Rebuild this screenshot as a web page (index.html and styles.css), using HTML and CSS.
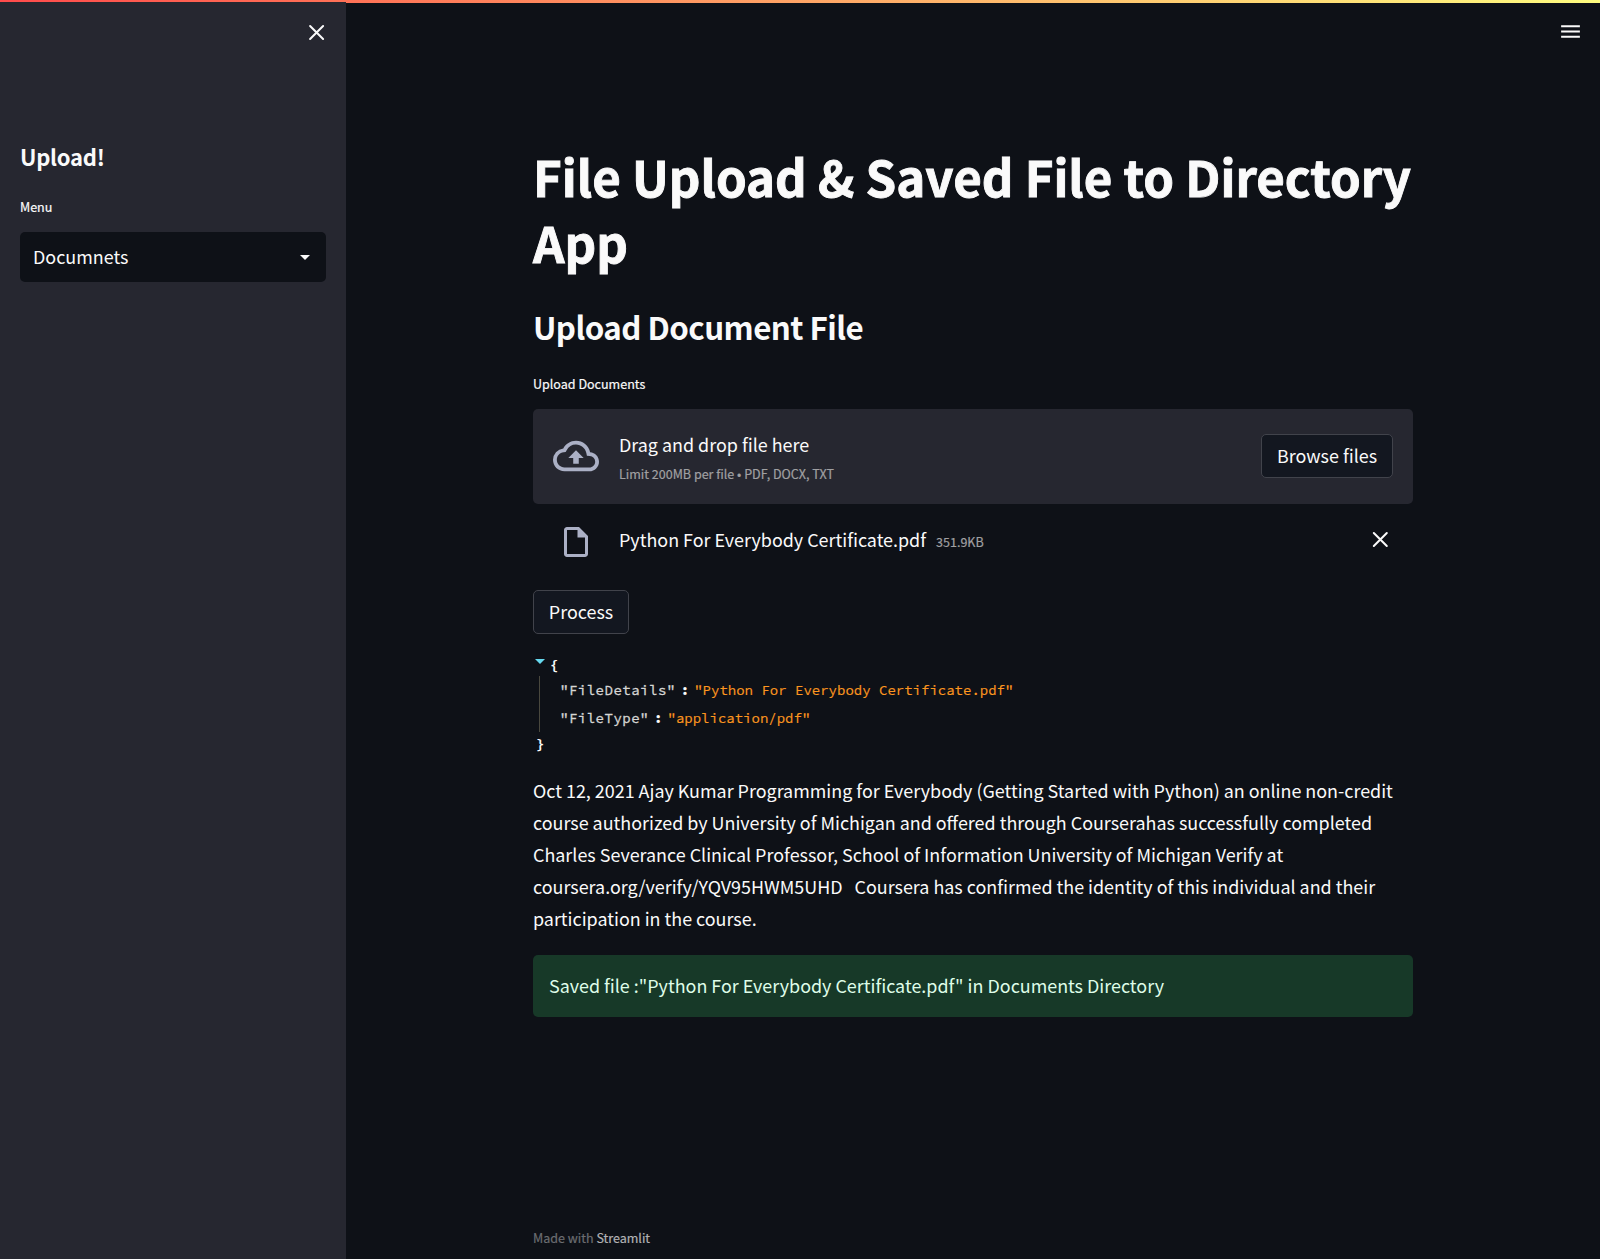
FILE: index.html
```html
<!DOCTYPE html>
<html lang="en">
<head>
<meta charset="utf-8">
<title>File Upload</title>
<link rel="stylesheet" href="styles.css">
</head>
<body>
<div class="decoration"></div>
<div class="app">
  <aside class="sidebar">
    <div class="sidebar-top">
      <svg class="close" viewBox="0 0 16 16"><path d="M1.1 2l13 13M14.1 2l-13 13"/></svg>
    </div>
    <h3 class="sidebar-title">Upload!</h3>
    <div class="label sidebar-label">Menu</div>
    <div class="select">
      <span class="select-value">Documnets</span>
      <svg class="caret" viewBox="0 0 10 5"><path d="M0 0h10L5 5z"/></svg>
    </div>
  </aside>
  <main class="main">
    <header class="toolbar">
      <svg class="menu" viewBox="0 0 24 24"><path d="M3 18h18v-2H3v2zm0-5h18v-2H3v2zm0-7v2h18V6H3z"/></svg>
    </header>
    <div class="content">
      <h1 class="title">File Upload &amp; Saved File to Directory App</h1>
      <h2 class="subtitle">Upload Document File</h2>
      <div class="label upload-label">Upload Documents</div>
      <section class="dropzone">
        <svg class="cloud" viewBox="0 0 24 24"><path d="M19.35 10.04A7.49 7.49 0 0012 4C9.11 4 6.6 5.64 5.35 8.04A5.994 5.994 0 000 14c0 3.31 2.69 6 6 6h13c2.76 0 5-2.24 5-5 0-2.64-2.05-4.78-4.65-4.96zM19 18H6c-2.21 0-4-1.79-4-4 0-2.05 1.53-3.76 3.56-3.97l1.07-.11.5-.95A5.469 5.469 0 0112 6c2.62 0 4.88 1.86 5.39 4.43l.3 1.5 1.53.11A2.98 2.98 0 0122 15c0 1.65-1.35 3-3 3zM8 13h2.55v3h2.9v-3H16l-4-4-4 4z"/></svg>
        <div class="drop-text">
          <span class="drop-main">Drag and drop file here</span>
          <small class="drop-limit">Limit 200MB per file • PDF, DOCX, TXT</small>
        </div>
        <button class="button browse">Browse files</button>
      </section>
      <div class="file">
        <svg class="file-icon" viewBox="0 0 24 24"><path d="M14 2H6c-1.1 0-1.99.9-1.99 2L4 20c0 1.1.89 2 1.99 2H18c1.1 0 2-.9 2-2V8l-6-6zM6 20V4h7v5h5v11H6z"/></svg>
        <span class="file-name">Python For Everybody Certificate.pdf</span>
        <small class="file-size">351.9KB</small>
        <svg class="close file-close" viewBox="0 0 16 16"><path d="M.8 1l13 13M13.8 1l-13 13"/></svg>
      </div>
      <button class="button process">Process</button>
      <div class="json">
        <div class="json-open"><svg class="json-caret" viewBox="0 0 10 5"><path d="M0 0h10L5 5z"/></svg><b>{</b></div>
        <div class="json-body">
          <div class="json-row"><span class="key">"FileDetails"</span><b class="colon">:</b><span class="value">"Python For Everybody Certificate.pdf"</span></div>
          <div class="json-row"><span class="key">"FileType"</span><b class="colon">:</b><span class="value">"application/pdf"</span></div>
        </div>
        <div class="json-end"><b>}</b></div>
      </div>
      <p class="text">Oct 12, 2021 Ajay Kumar Programming for Everybody (Getting Started with Python) an online non-credit<br>course authorized by University of Michigan and offered through Courserahas successfully completed<br>Charles Severance Clinical Professor, School of Information University of Michigan Verify at<br>coursera.org/verify/YQV95HWM5UHD &nbsp; Coursera has confirmed the identity of this individual and their<br>participation in the course.</p>
      <div class="alert">Saved file :"Python For Everybody Certificate.pdf" in Documents Directory</div>
    </div>
    <footer class="footer">Made with <a class="footer-link">Streamlit</a></footer>
  </main>
</div>
</body>
</html>
```
FILE: styles.css
```css
* { box-sizing: border-box; }
body {
  margin: 0;
  background: #0e1117;
  color: #fafafa;
  font: 17.92px/32px "Source Sans Pro", "Noto Sans CJK JP", "Noto Sans", sans-serif;
}
h1, h2, h3, p { margin: 0; }
svg { display: block; flex: none; fill: currentColor; }
.decoration {
  position: absolute;
  top: 0; left: 0; right: 0;
  height: 3px;
  background: linear-gradient(90deg, #ff4b4b, #fffd80);
}
.app { display: flex; height: 1259px; }
.sidebar {
  position: relative;
  width: 346px;
  margin-top: 2px;
  padding: 0 20px;
  background: #262730;
}
.sidebar-top { display: flex; justify-content: flex-end; padding: 22px 1px 0 0; height: 137px; }
.close { width: 16px; height: 16px; overflow: visible; fill: none; stroke: currentColor; stroke-width: 2; stroke-linecap: round; }
.sidebar-title { font-size: 22px; line-height: 34px; font-weight: 600; letter-spacing: -0.25px; }
.label { font-size: 12.54px; line-height: 20px; -webkit-text-stroke: 0.2px; }
.sidebar-label { margin-top: 24px; }
.select {
  display: flex;
  align-items: center;
  justify-content: space-between;
  height: 50px;
  margin-top: 15px;
  padding: 0 16px 0 13px;
  border-radius: 5px;
  background: #0e1117;
}
.select-value { padding-bottom: 2px; }
.caret { width: 10px; height: 5px; }
.main { flex: 1; display: flex; flex-direction: column; }
.toolbar { display: flex; justify-content: flex-end; padding: 19px 17px 0; height: 143px; }
.menu { width: 25px; height: 25px; }
.content { width: 880px; margin-left: 187px; }
.title { font-size: 49.2px; line-height: 66px; font-weight: 700; -webkit-text-stroke: 0.9px; }
.subtitle { margin-top: 31px; font-size: 31.3px; line-height: 42px; font-weight: 600; letter-spacing: -0.56px; }
.upload-label { margin-top: 26px; }
.dropzone {
  display: flex;
  align-items: center;
  height: 95px;
  margin-top: 15px;
  padding: 0 20px 2px;
  border-radius: 5px;
  background: #262730;
}
.cloud { width: 46px; height: 46px; color: #abb0c5; }
.drop-text { display: flex; flex-direction: column; flex: 1; gap: 4px; margin-left: 20px; }
.drop-limit, .file-size { font-size: 12.54px; line-height: 20px; color: #a0a0a2; -webkit-text-stroke: 0.2px; }
.button {
  height: 44px;
  padding: 0 0 2px;
  border: 1px solid #41434b;
  border-radius: 5px;
  background: #131720;
  color: inherit;
  font: inherit;
}
.browse { width: 132px; }
.file { display: flex; align-items: baseline; height: 86px; padding: 19px 24px 0 25px; }
.file-icon { align-self: flex-start; width: 36px; height: 36px; margin-top: 1px; color: #abb0c5; }
.file-name { margin-left: 25px; }
.file-size { margin-left: 10px; }
.file-close { align-self: flex-start; margin: 9px 0 0 auto; }
.process { display: block; width: 96px; }
.json { height: 140px; padding-top: 18px; font: 14px/28px "Source Code Pro", "Noto Sans Mono CJK JP", "Liberation Mono", monospace; }
.json-open { display: flex; height: 24px; padding-left: 2px; }
.json-caret { width: 10px; height: 5px; margin: 7px 5px 0 0; color: #66d9ef; }
.json-open b { line-height: 26px; }
.json-body { margin-left: 6px; padding-left: 20px; border-left: 1px solid #49483e; }
.json-row { display: flex; height: 28px; }
.key { letter-spacing: 0.5px; color: #d6d6d4; -webkit-text-stroke: 0.3px; }
.colon { width: 18.5px; text-align: center; }
.value { color: #fd971f; -webkit-text-stroke: 0.15px; }
.json-end { padding-left: 3px; line-height: 24px; }
.text { white-space: nowrap; }
.alert {
  height: 62px;
  margin-top: 21px;
  padding: 14px 16px;
  border-radius: 5px;
  background: #173928;
  color: #dffde9;
}
.footer { margin-top: auto; padding: 0 0 11px 187px; font-size: 12.54px; line-height: 20px; color: #6b6d71; -webkit-text-stroke: 0.2px; }
.footer-link { color: #b1b2b4; }
```
